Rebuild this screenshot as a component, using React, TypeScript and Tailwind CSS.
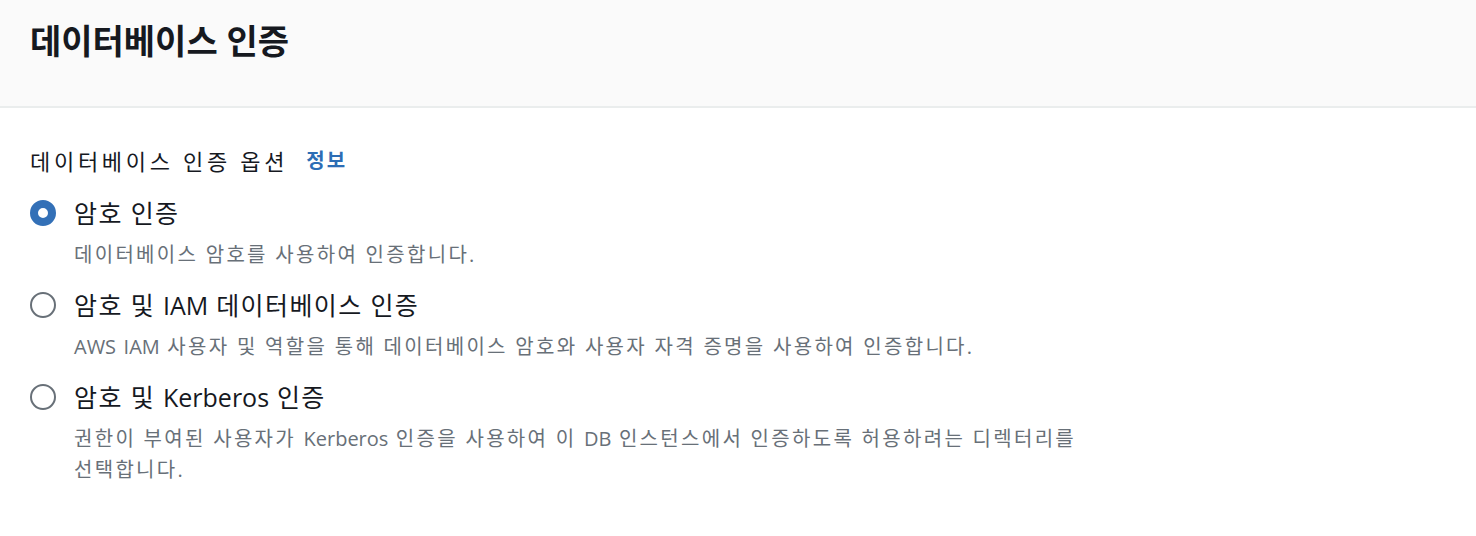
import { Fragment, useState } from 'react';

interface AuthOption {
  id: string;
  label: string;
  desc: string;
}

const OPTIONS: AuthOption[] = [
  { id: 'password', label: '암호 인증', desc: '데이터베이스 암호를 사용하여 인증합니다.' },
  { id: 'iam', label: '암호 및 IAM 데이터베이스 인증', desc: 'AWS IAM 사용자 및 역할을 통해 데이터베이스 암호와 사용자 자격 증명을 사용하여 인증합니다.' },
  {
    id: 'kerberos',
    label: '암호 및 Kerberos 인증',
    desc: '권한이 부여된 사용자가 Kerberos 인증을 사용하여 이 DB 인스턴스에서 인증하도록 허용하려는 디렉터리를 선택합니다.',
  },
];

// hangul gets a little extra spacing, latin words keep normal spacing
function Spaced({ text }: { text: string }) {
  const parts = text.split(/([A-Za-z]+)/);
  return (
    <>
      {parts.map((p, i) =>
        /^[A-Za-z]+$/.test(p) ? (
          <span key={i} className="tracking-normal">{p}</span>
        ) : (
          <Fragment key={i}>{p}</Fragment>
        )
      )}
    </>
  );
}

export default function App() {
  const [selected, setSelected] = useState('password');

  return (
    <div className="min-h-[536px] bg-white text-[#16191f] break-keep" style={{ fontFamily: '"Open Sans", "Noto Sans CJK KR", sans-serif' }}>
      {/* Header */}
      <div className="h-[108px] bg-[#fafafa] border-b-2 border-[#eaeded] px-[30px] pt-[16px]">
        <h2 className="text-[34px] font-bold leading-[50px]">데이터베이스 인증</h2>
      </div>

      {/* Body */}
      <div className="px-[30px] pt-[38px]">
        <div className="flex items-center gap-[18px] text-[22px] leading-[30px]">
          <span className="tracking-[3.7px]">데이터베이스 인증 옵션</span>
          <a className="text-[#2c6db5] font-bold text-[20px] tracking-[2px]">정보</a>
        </div>

        <div className="mt-[23px] flex flex-col gap-[21px]">
          {OPTIONS.map(o => {
            const isOn = o.id === selected;
            return (
              <label key={o.id} className="flex items-start gap-[18px] cursor-pointer" onClick={() => setSelected(o.id)}>
                <span
                  className={
                    isOn
                      ? 'mt-[1px] w-[26px] h-[26px] shrink-0 rounded-full border-[8px] border-[#3370b7] bg-white'
                      : 'mt-[1px] w-[26px] h-[26px] shrink-0 rounded-full border-2 border-[#687078] bg-white'
                  }
                />
                <div className="flex flex-col">
                  <span className="text-[25px] leading-[28px] tracking-[1.4px]">
                    <Spaced text={o.label} />
                  </span>
                  <p className="mt-[12px] max-w-[1015px] text-[20px] leading-[31px] text-[#687078] tracking-[2.3px]">
                    <Spaced text={o.desc} />
                  </p>
                </div>
              </label>
            );
          })}
        </div>
      </div>
    </div>
  );
}
